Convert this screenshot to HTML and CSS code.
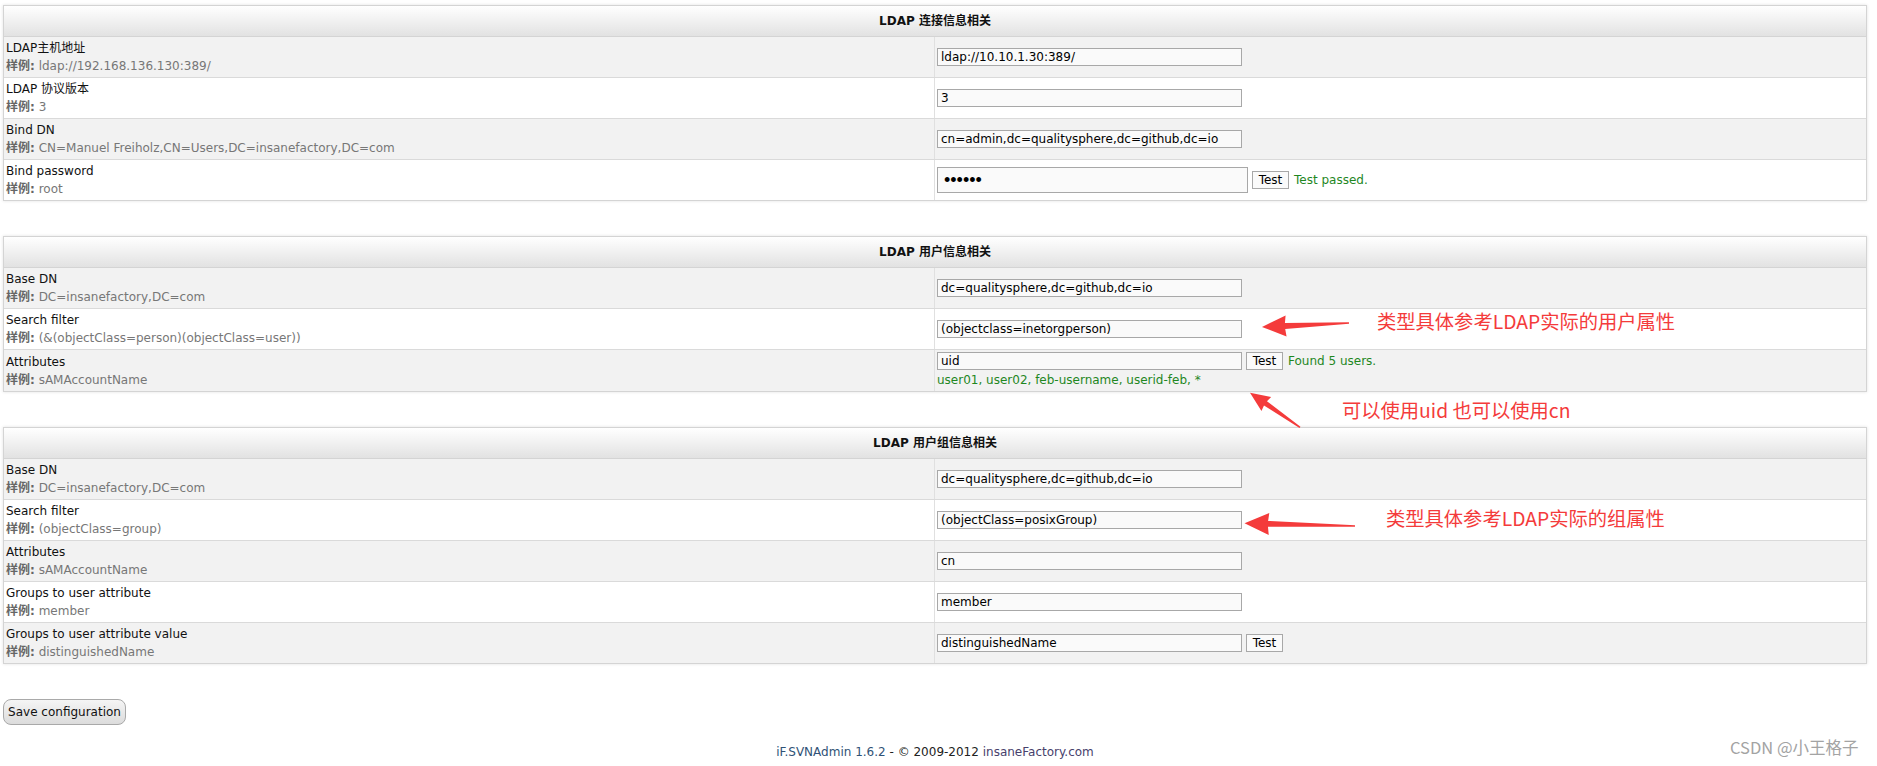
FILE: index.html
```html
<!DOCTYPE html>
<html lang="zh-CN">
<head>
<meta charset="utf-8">
<title>iF.SVNAdmin - LDAP</title>
<link rel="stylesheet" href="styles.css">
</head>
<body>
<div class="page">
  <section class="panel">
    <div class="panel-head">LDAP 连接信息相关</div>
    <div class="row alt">
      <div class="label"><div>LDAP主机地址</div><div class="ex"><b>样例:</b> ldap://192.168.136.130:389/</div></div>
      <div class="value"><div class="line"><input class="txt" type="text" value="ldap://10.10.1.30:389/"></div></div>
    </div>
    <div class="row">
      <div class="label"><div>LDAP 协议版本</div><div class="ex"><b>样例:</b> 3</div></div>
      <div class="value"><div class="line"><input class="txt" type="text" value="3"></div></div>
    </div>
    <div class="row alt">
      <div class="label"><div>Bind DN</div><div class="ex"><b>样例:</b> CN=Manuel Freiholz,CN=Users,DC=insanefactory,DC=com</div></div>
      <div class="value"><div class="line"><input class="txt" type="text" value="cn=admin,dc=qualitysphere,dc=github,dc=io"></div></div>
    </div>
    <div class="row">
      <div class="label"><div>Bind password</div><div class="ex"><b>样例:</b> root</div></div>
      <div class="value"><div class="line"><input class="pwd" type="password" value="123456"><button class="test">Test</button><span class="ok">Test passed.</span></div></div>
    </div>
  </section>

  <section class="panel">
    <div class="panel-head">LDAP 用户信息相关</div>
    <div class="row alt">
      <div class="label"><div>Base DN</div><div class="ex"><b>样例:</b> DC=insanefactory,DC=com</div></div>
      <div class="value"><div class="line"><input class="txt" type="text" value="dc=qualitysphere,dc=github,dc=io"></div></div>
    </div>
    <div class="row">
      <div class="label"><div>Search filter</div><div class="ex"><b>样例:</b> (&amp;(objectClass=person)(objectClass=user))</div></div>
      <div class="value"><div class="line"><input class="txt" type="text" value="(objectclass=inetorgperson)"></div></div>
    </div>
    <div class="row alt">
      <div class="label"><div>Attributes</div><div class="ex"><b>样例:</b> sAMAccountName</div></div>
      <div class="value">
        <div class="line"><input class="txt" type="text" value="uid"><button class="test">Test</button><span class="ok">Found 5 users.</span></div>
        <div class="ok users">user01, user02, feb-username, userid-feb, *</div>
      </div>
    </div>
  </section>

  <section class="panel">
    <div class="panel-head">LDAP 用户组信息相关</div>
    <div class="row alt">
      <div class="label"><div>Base DN</div><div class="ex"><b>样例:</b> DC=insanefactory,DC=com</div></div>
      <div class="value"><div class="line"><input class="txt" type="text" value="dc=qualitysphere,dc=github,dc=io"></div></div>
    </div>
    <div class="row">
      <div class="label"><div>Search filter</div><div class="ex"><b>样例:</b> (objectClass=group)</div></div>
      <div class="value"><div class="line"><input class="txt" type="text" value="(objectClass=posixGroup)"></div></div>
    </div>
    <div class="row alt">
      <div class="label"><div>Attributes</div><div class="ex"><b>样例:</b> sAMAccountName</div></div>
      <div class="value"><div class="line"><input class="txt" type="text" value="cn"></div></div>
    </div>
    <div class="row">
      <div class="label"><div>Groups to user attribute</div><div class="ex"><b>样例:</b> member</div></div>
      <div class="value"><div class="line"><input class="txt" type="text" value="member"></div></div>
    </div>
    <div class="row alt">
      <div class="label"><div>Groups to user attribute value</div><div class="ex"><b>样例:</b> distinguishedName</div></div>
      <div class="value"><div class="line"><input class="txt" type="text" value="distinguishedName"><button class="test">Test</button></div></div>
    </div>
  </section>

  <button class="save">Save configuration</button>

  <footer class="footer"><span class="lnk1">iF.SVNAdmin 1.6.2</span> - © 2009-2012 <span class="lnk2">insaneFactory.com</span></footer>
</div>

<svg class="arrows" width="1877" height="766" viewBox="0 0 1877 766" aria-hidden="true">
  <g fill="#f43b3b">
    <g transform="translate(1349 323) rotate(177.37)">
      <polygon points="0,-0.8 64,-3 63,-10.5 87.1,0 63,10.5 64,3 0,0.8"/>
    </g>
    <g transform="translate(1300 427.3) rotate(-145.3)">
      <polygon points="0,-0.8 42,-2.6 41,-8.5 60.8,0 41,8.5 42,2.6 0,0.8"/>
    </g>
    <g transform="translate(1355 526) rotate(-178.6)">
      <polygon points="0,-0.8 87,-3 86,-11 110.5,0 86,11 87,3 0,0.8"/>
    </g>
  </g>
</svg>
<div class="note note1">类型具体参考LDAP实际的用户属性</div>
<div class="note note2">可以使用uid 也可以使用cn</div>
<div class="note note3">类型具体参考LDAP实际的组属性</div>
<div class="watermark">CSDN @小王格子</div>
</body>
</html>
```

FILE: styles.css
```css
html, body {
  margin: 0;
  padding: 0;
  background: #fff;
}
body {
  position: relative;
  width: 1877px;
  height: 766px;
  overflow: hidden;
  font: 12px "DejaVu Sans", Verdana, "Noto Sans CJK SC", sans-serif;
  color: #111;
}
.page {
  padding: 5px 10px 0 3px;
}
.panel {
  border: 1px solid #d4d4d4;
  box-shadow: 0 0 3px rgba(0, 0, 0, 0.12);
  margin-bottom: 35px;
  background: #fff;
}
.panel-head {
  height: 30px;
  line-height: 30px;
  text-align: center;
  font-weight: bold;
  color: #111;
  background: linear-gradient(#ffffff, #e2e2e2);
  border-bottom: 1px solid #d4d4d4;
}
.row {
  display: grid;
  grid-template-columns: 931px 1fr;
  border-bottom: 1px solid #dadada;
}
.row:last-child {
  border-bottom: 0;
}
.row.alt {
  background: #f2f2f2;
}
.label {
  box-sizing: border-box;
  padding: 2px 2px;
  line-height: 18px;
  min-height: 40px;
  border-right: 1px solid #e0e0e0;
  display: flex;
  flex-direction: column;
  justify-content: center;
  color: #111;
}
.ex {
  color: #777;
}
.ex b {
  color: #666;
}
.value {
  padding: 2px 2px;
  display: flex;
  flex-direction: column;
  justify-content: center;
}
.line {
  display: flex;
  align-items: center;
}
input {
  font: 12px "DejaVu Sans", Verdana, sans-serif;
  color: #000;
  box-sizing: border-box;
  margin: 0;
  border: 1px solid #a8a8a8;
  background: #fafafa;
  outline: none;
}
.txt {
  width: 305px;
  height: 18px;
  padding: 0 3px;
}
.pwd {
  width: 311px;
  height: 26px;
  padding: 0 6px;
  font: 18px "Liberation Sans", Arial, sans-serif;
}
.test {
  box-sizing: border-box;
  height: 18px;
  width: 37px;
  padding: 0;
  margin-left: 4px;
  font: 12px "DejaVu Sans", Verdana, sans-serif;
  color: #000;
  background: #fafafa;
  border: 1px solid #a8a8a8;
  border-radius: 0;
}
.ok {
  color: #1f871f;
  margin-left: 5px;
}
.users {
  margin-left: 0;
  margin-top: 1px;
  line-height: 18px;
}
.save {
  display: block;
  box-sizing: border-box;
  width: 123px;
  height: 26px;
  padding: 0;
  font: 12px "DejaVu Sans", Verdana, sans-serif;
  color: #111;
  background: linear-gradient(#f5f5f5, #dcdcdc);
  border: 1px solid #a9a9a9;
  border-radius: 8px;
}
.footer {
  margin-top: 18px;
  line-height: 18px;
  text-align: center;
  color: #222;
}
.lnk1 {
  color: #2f5276;
}
.lnk2 {
  color: #47416c;
}
.arrows {
  position: absolute;
  left: 0;
  top: 0;
  pointer-events: none;
}
.note {
  position: absolute;
  font: 19.3px/20px "Noto Sans CJK SC", sans-serif;
  color: #f43b3b;
  white-space: nowrap;
}
.note1 {
  left: 1377px;
  top: 311px;
}
.note2 {
  left: 1342px;
  top: 400px;
}
.note3 {
  left: 1386px;
  top: 508px;
}
.watermark {
  position: absolute;
  left: 1730px;
  top: 737px;
  font: 16.5px/20px "Noto Sans CJK SC", sans-serif;
  color: #a3a3a3;
  white-space: nowrap;
}
```
